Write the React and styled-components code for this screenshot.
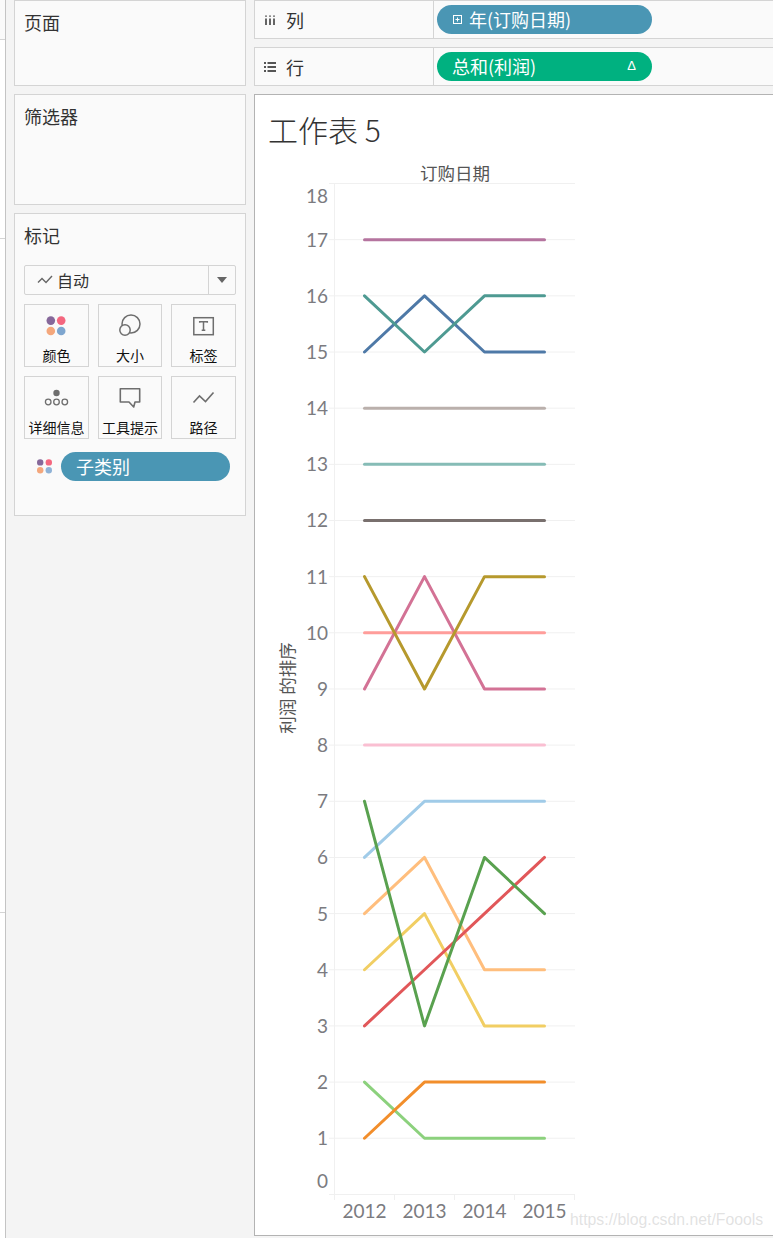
import React from "react";
import styled, { createGlobalStyle } from "styled-components";

const CJK = `"Noto Sans CJK SC", "Noto Sans", sans-serif`;
const BORDER = "#d4d4d4";

const Global = createGlobalStyle`
  html, body { margin: 0; padding: 0; background: #f4f4f4; }
  body { font-family: ${CJK}; overflow: hidden; }
`;

const Page = styled.div`
  width: 773px;
  height: 1238px;
  display: grid;
  grid-template-columns: 6px 232px 1fr;
  column-gap: 8px;
  overflow: hidden;
  background: #f4f4f4;
`;

const Strip = styled.div`
  display: grid;
  grid-template-rows: 40px 199px 674px 1fr;
  background: #fff;
  border-right: 1px solid #c4c4c4;
`;
const StripCell = styled.div`
  background: ${(p) => (p.$tint ? "#fafafa" : "#fff")};
  border-bottom: ${(p) => (p.$last ? "none" : `1px solid ${BORDER}`)};
`;

const Sidebar = styled.aside`
  display: flex;
  flex-direction: column;
  gap: 8px;
`;
const Panel = styled.section`
  box-sizing: border-box;
  height: ${(p) => p.$h}px;
  background: #fafafa;
  border: 1px solid ${BORDER};
  padding: 8px 9px 0;
`;
const PanelTitle = styled.h3`
  margin: 0;
  font-size: 18px;
  font-weight: 400;
  line-height: 26px;
  color: #333;
`;

const Select = styled.div`
  box-sizing: border-box;
  margin-top: 17px;
  height: 30px;
  display: flex;
  align-items: stretch;
  border: 1px solid ${BORDER};
  border-radius: 2px;
`;
const SelectValue = styled.div`
  flex: 1;
  display: flex;
  align-items: center;
  gap: 4px;
  padding-left: 12px;
  font-size: 16px;
  color: #333;
`;
const SelectArrow = styled.div`
  width: 26px;
  border-left: 1px solid ${BORDER};
  display: flex;
  align-items: center;
  justify-content: center;
  &::after {
    content: "";
    border-left: 5px solid transparent;
    border-right: 5px solid transparent;
    border-top: 6px solid #666;
  }
`;
const MarkGrid = styled.div`
  margin-top: 9px;
  display: grid;
  grid-template-columns: 65px 64px 65px;
  grid-auto-rows: 63px;
  gap: 9px;
`;
const MarkButton = styled.div`
  box-sizing: border-box;
  border: 1px solid ${BORDER};
  display: flex;
  flex-direction: column;
  align-items: center;
  padding-top: 8px;
`;
const MarkIcon = styled.svg`
  width: 26px;
  height: 26px;
  display: block;
  flex: none;
`;
const MarkLabel = styled.span`
  margin-top: 6px;
  font-size: 14px;
  line-height: 20px;
  color: #111;
  white-space: nowrap;
`;
const FieldRow = styled.div`
  margin-top: 13px;
  display: flex;
  align-items: center;
  gap: 6px;
  padding-left: 10px;
`;
const Pill = styled.div`
  box-sizing: border-box;
  height: 29px;
  width: ${(p) => p.$w}px;
  border-radius: 15px;
  background: ${(p) => p.$bg};
  color: #fff;
  font-size: 18px;
  display: flex;
  align-items: center;
  padding: 0 15px 2px;
  white-space: nowrap;
`;
const Delta = styled.span`
  margin-left: auto;
  padding-right: 1px;
  font-family: "Liberation Sans", sans-serif;
  font-size: 13px;
`;
const PlusBox = styled.svg`
  width: 11px;
  height: 11px;
  margin: 2px 6px 0 0;
  flex: none;
`;

const Main = styled.main`
  display: flex;
  flex-direction: column;
  gap: 8px;
  min-width: 0;
`;
const Shelf = styled.div`
  box-sizing: border-box;
  height: ${(p) => p.$h}px;
  display: flex;
  background: #fafafa;
  border: 1px solid ${BORDER};
  border-right: none;
`;
const ShelfLabel = styled.div`
  box-sizing: border-box;
  width: 179px;
  border-right: 1px solid ${BORDER};
  display: flex;
  align-items: center;
  gap: 10px;
  padding-left: 9px;
  font-size: 18px;
  color: #333;
`;
const ShelfBody = styled.div`
  flex: 1;
  display: flex;
  align-items: center;
  padding-left: 3px;
`;
const ShelfIcon = styled.svg`
  width: 12px;
  height: 12px;
  flex: none;
`;

const Canvas = styled.section`
  position: relative;
  box-sizing: border-box;
  height: 1142px;
  width: 530px;
  background: #fff;
  border: 1px solid #b3b3b3;
`;
const Title = styled.h1`
  margin: 0;
  height: 65px;
  box-sizing: border-box;
  padding: 12px 0 0 13px;
  font-size: 30px;
  font-weight: 300;
  line-height: 44px;
  color: #333;
`;
const Chart = styled.svg`
  display: block;
`;
const Watermark = styled.span`
  position: absolute;
  left: 315px;
  top: 1114px;
  font-family: "Liberation Sans", sans-serif;
  font-size: 15.8px;
  line-height: 22px;
  color: rgba(190, 190, 190, 0.45);
  white-space: nowrap;
`;

const Dots = ({ size = 26, r = 4.3 }) => (
  <svg width={size} height={size} viewBox="0 0 26 26" style={{ flex: "none" }}>
    <circle cx="6.8" cy="7.6" r={r} fill="#86689a" />
    <circle cx="17.2" cy="7.6" r={r} fill="#f4677f" />
    <circle cx="6.8" cy="18" r={r} fill="#f4a77c" />
    <circle cx="17.2" cy="18" r={r} fill="#7ea6cf" />
  </svg>
);

const FieldDots = () => (
  <svg width="21" height="21" viewBox="0 0 21 21" style={{ flex: "none" }}>
    <circle cx="6.2" cy="6.4" r="3.2" fill="#86689a" />
    <circle cx="14.8" cy="6.4" r="3.2" fill="#f4677f" />
    <circle cx="6.2" cy="14.2" r="3.2" fill="#f4a77c" />
    <circle cx="14.8" cy="14.2" r="3.2" fill="#8fb2d6" />
  </svg>
);

const PathLine = ({ w = 16, h = 12 }) => (
  <svg width={w} height={h} viewBox="0 0 16 12" style={{ flex: "none" }}>
    <path d="M1 8.5 L5 4.5 L9 8.5 L15 2" fill="none" stroke="#666" strokeWidth="1.4" />
  </svg>
);

const GREY = "#6e6e6e";

const marks = [
  { label: "颜色", icon: <Dots /> },
  {
    label: "大小",
    icon: (
      <MarkIcon viewBox="0 0 26 26">
        <circle cx="14" cy="11" r="9" fill="none" stroke={GREY} strokeWidth="1.5" />
        <circle cx="8" cy="17" r="5.2" fill="#fafafa" stroke={GREY} strokeWidth="1.5" />
      </MarkIcon>
    ),
  },
  {
    label: "标签",
    icon: (
      <MarkIcon viewBox="0 0 26 26">
        <rect x="2.8" y="4.7" width="19.5" height="17" fill="none" stroke={GREY} strokeWidth="1.5" />
        <path d="M8.7 9.8 V8.7 H16.3 V9.8 M12.5 8.7 V17 M10.7 17.2 H14.3" fill="none" stroke={GREY} strokeWidth="1.5" />
      </MarkIcon>
    ),
  },
  {
    label: "详细信息",
    icon: (
      <MarkIcon viewBox="0 0 26 26">
        <circle cx="12.5" cy="8" r="3.2" fill={GREY} />
        <circle cx="4.2" cy="17" r="2.8" fill="none" stroke={GREY} strokeWidth="1.3" />
        <circle cx="12.5" cy="17" r="2.8" fill="none" stroke={GREY} strokeWidth="1.3" />
        <circle cx="20.8" cy="17" r="2.8" fill="none" stroke={GREY} strokeWidth="1.3" />
      </MarkIcon>
    ),
  },
  {
    label: "工具提示",
    icon: (
      <MarkIcon viewBox="0 0 26 26">
        <path d="M3.3 3.8 H22.7 V17 H18 L16.7 22 L12 17 H3.3 Z" fill="none" stroke={GREY} strokeWidth="1.6" strokeLinejoin="round" />
      </MarkIcon>
    ),
  },
  {
    label: "路径",
    icon: (
      <MarkIcon viewBox="0 0 26 26">
        <path d="M2.5 17.5 L8.5 11 L14.5 16.5 L22.5 7.5" fill="none" stroke={GREY} strokeWidth="1.6" />
      </MarkIcon>
    ),
  },
];

const Y = (v) => 1194.4 - v * 56.16;
const X = [364.5, 424.5, 484.5, 544.5];

const series = [
  ["#ff9d9a", [10, 10, 10, 10]],
  ["#fabfd2", [8, 8, 8, 8]],
  ["#bab0ac", [14, 14, 14, 14]],
  ["#86bcb6", [13, 13, 13, 13]],
  ["#79706e", [12, 12, 12, 12]],
  ["#b5749f", [17, 17, 17, 17]],
  ["#4e79a7", [15, 16, 15, 15]],
  ["#4e9a92", [16, 15, 16, 16]],
  ["#d37295", [9, 11, 9, 9]],
  ["#b6992d", [11, 9, 11, 11]],
  ["#a0cbe8", [6, 7, 7, 7]],
  ["#ffbe7d", [5, 6, 4, 4]],
  ["#f1ce63", [4, 5, 3, 3]],
  ["#e15759", [3, 4, 5, 6]],
  ["#59a14f", [7, 3, 6, 5]],
  ["#8cd17d", [2, 1, 1, 1]],
  ["#f28e2b", [1, 2, 2, 2]],
];

const yLabels = Array.from({ length: 19 }, (_, v) => ({
  v,
  y: v === 18 ? 196 : v === 0 ? 1181 : Y(v),
}));

const AXIS_FONT = { fontFamily: '"Lato", sans-serif', fontSize: 19, fill: "#7b7b80" };

export default function App() {
  return (
    <Page>
      <Global />
      <Strip>
        <StripCell $tint />
        <StripCell />
        <StripCell />
        <StripCell $last />
      </Strip>
      <Sidebar>
        <Panel $h={86}>
          <PanelTitle>页面</PanelTitle>
        </Panel>
        <Panel $h={111}>
          <PanelTitle>筛选器</PanelTitle>
        </Panel>
        <Panel $h={303}>
          <PanelTitle>标记</PanelTitle>
          <Select>
            <SelectValue>
              <PathLine />
              自动
            </SelectValue>
            <SelectArrow />
          </Select>
          <MarkGrid>
            {marks.map((m) => (
              <MarkButton key={m.label}>
                {m.icon}
                <MarkLabel>{m.label}</MarkLabel>
              </MarkButton>
            ))}
          </MarkGrid>
          <FieldRow>
            <FieldDots />
            <Pill $w={169} $bg="#4a96b4">
              子类别
            </Pill>
          </FieldRow>
        </Panel>
      </Sidebar>
      <Main>
        <Shelf $h={39}>
          <ShelfLabel>
            <ShelfIcon viewBox="0 0 12 12">
              <path d="M2 1.5 V2.8 M6 1.5 V2.8 M10 1.5 V2.8 M2 4.6 V11 M6 4.6 V11 M10 4.6 V11" stroke="#555" strokeWidth="1.8" />
            </ShelfIcon>
            列
          </ShelfLabel>
          <ShelfBody>
            <Pill $w={215} $bg="#4a96b4">
              <PlusBox viewBox="0 0 11 11">
                <rect x="1.5" y="1.5" width="8" height="8" fill="none" stroke="#fff" strokeWidth="1" />
                <path d="M3.5 5.5 H7.5 M5.5 3.5 V7.5" stroke="#fff" strokeWidth="1" />
              </PlusBox>
              年(订购日期)
            </Pill>
          </ShelfBody>
        </Shelf>
        <Shelf $h={39}>
          <ShelfLabel>
            <ShelfIcon viewBox="0 0 12 12">
              <path d="M0 2 H2 M3.5 2 H12 M0 6 H2 M3.5 6 H12 M0 10 H2 M3.5 10 H12" stroke="#555" strokeWidth="1.8" />
            </ShelfIcon>
            行
          </ShelfLabel>
          <ShelfBody>
            <Pill $w={215} $bg="#00b180">
              总和(利润)
              <Delta>Δ</Delta>
            </Pill>
          </ShelfBody>
        </Shelf>
        <Canvas>
          <Title>工作表 5</Title>
          <Chart width="518" height="1075" viewBox="255 160 518 1075">
            <text x="455" y="179.5" textAnchor="middle" fontFamily={CJK} fontSize="17.5" fill="#555">
              订购日期
            </text>
            <text
              transform="translate(294 688) rotate(-90)"
              textAnchor="middle"
              fontFamily={CJK}
              fontSize="17.5"
              fill="#555"
            >
              利润 的排序
            </text>
            <g stroke="#f0f0f0" strokeWidth="1" fill="none">
              <path d="M334.5 183 V1200" />
              {[394.5, 454.5, 514.5, 574.5].map((x) => (
                <path key={x} d={`M${x} 1194 V1200`} />
              ))}
              <path d="M329 183.5 H575" />
              <path d="M329 1194.5 H575" />
              {Array.from({ length: 17 }, (_, i) => i + 1).map((v) => (
                <path key={v} d={`M329 ${Y(v)} H575`} />
              ))}
            </g>
            {yLabels.map(({ v, y }) => (
              <text key={v} x="328" y={y + 7} textAnchor="end" {...AXIS_FONT}>
                {v}
              </text>
            ))}
            {[2012, 2013, 2014, 2015].map((yr, i) => (
              <text key={yr} x={X[i]} y="1218" textAnchor="middle" {...AXIS_FONT}>
                {yr}
              </text>
            ))}
            {series.map(([color, vals]) => (
              <polyline
                key={color}
                points={vals.map((v, i) => `${X[i]},${Y(v)}`).join(" ")}
                fill="none"
                stroke={color}
                strokeWidth="3"
                strokeLinejoin="round"
                strokeLinecap="round"
              />
            ))}
          </Chart>
          <Watermark>https://blog.csdn.net/Foools</Watermark>
        </Canvas>
      </Main>
    </Page>
  );
}
